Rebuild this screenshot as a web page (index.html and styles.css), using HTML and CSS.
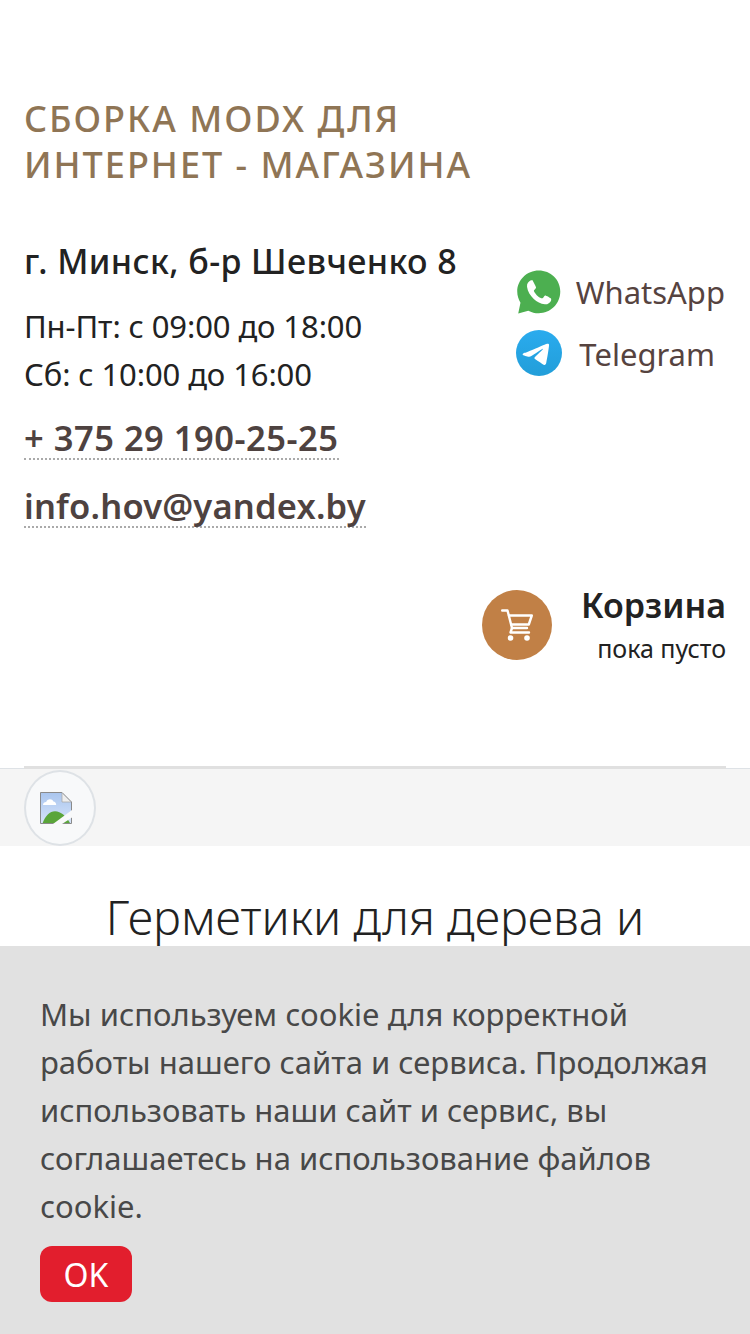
FILE: index.html
```html
<!DOCTYPE html>
<html lang="ru">
<head>
<meta charset="utf-8">
<title>Сборка MODX для интернет-магазина</title>
<link rel="stylesheet" href="styles.css">
</head>
<body>
<header class="header">
  <a class="brand">СБОРКА MODX ДЛЯ<br>ИНТЕРНЕТ - МАГАЗИНА</a>
  <div class="contacts">
    <div class="info">
      <div class="address">г. Минск, б-р Шевченко 8</div>
      <div class="hours">Пн-Пт: с 09:00 до 18:00<br>Сб: с 10:00 до 16:00</div>
      <div class="link-row"><a class="link link-phone">+ 375 29 190-25-25</a></div>
      <div class="link-row link-row-mail"><a class="link link-mail">info.hov@yandex.by</a></div>
    </div>
    <div class="messengers">
      <a class="messenger">
        <svg class="msg-icon" viewBox="1 0 44.500 45" width="44" height="44">
          <path fill="#4caf50" d="M23 .5C10.900 .5 1 10.200 1 22.100c0 4.100 1.200 8 3.300 11.300L2 44.500l10.300-2.900c3.200 1.700 6.900 2.700 10.700 2.700 12.100 0 22-9.700 22-22.200S35.100 .5 23 .5z"/>
          <path fill="#fff" d="M16.700 10.600c-.6-.1-1.500-.1-2.200.2-1.800 1-3.900 3.100-3.500 6.400.6 4.800 3.400 9.200 6.900 12.500 3.200 3 7 5 11.300 5.400 3 .2 5.300-1.700 6.200-3.500.4-.8.400-1.800.2-2.300-.3-.6-5.300-3.300-6.100-3.200-.9.200-2 2.800-2.800 2.900-1.900.3-6.800-3.300-8.700-7.600-.3-.8 2.100-2.300 2.200-3.300.1-.9-2.800-6-3.500-7.500-.1-.2-.1-.3-.2-.4z"/>
        </svg>
        <span class="msg-name">WhatsApp</span>
      </a>
      <a class="messenger messenger-tg">
        <svg class="msg-icon" viewBox="0 0 46 46" width="46" height="46">
          <defs><linearGradient id="tg" x1="0" y1="0" x2="0" y2="1"><stop offset="0" stop-color="#2aabee"/><stop offset="1" stop-color="#229ed9"/></linearGradient></defs>
          <circle cx="23" cy="23" r="23" fill="url(#tg)"/>
          <path fill="#fff" d="M9.500 22.800c6.800-3 11.300-4.900 13.600-5.900 6.500-2.700 7.800-3.200 8.700-3.200.2 0 .6 0 .9.300.2.200.3.400.3.700 0 .2.100.6 0 1-.3 3.700-1.900 12.700-2.700 16.800-.3 1.800-1 2.400-1.600 2.400-1.400.1-2.400-.9-3.700-1.800-2.100-1.400-3.300-2.200-5.300-3.500-2.400-1.500-.8-2.400.5-3.800.3-.4 6.500-5.900 6.600-6.500 0-.1 0-.3-.1-.4-.2-.1-.4-.1-.5 0-.2.100-3.700 2.400-10.400 6.900-1 .7-1.900 1-2.700 1-.9 0-2.600-.5-3.800-.9-1.600-.5-2.800-.8-2.700-1.600.1-.4.700-.9 1.900-1.500z"/>
        </svg>
        <span class="msg-name msg-name-tg">Telegram</span>
      </a>
    </div>
  </div>
  <div class="cart">
    <div class="cart-circle">
      <svg viewBox="0 0 32 32" width="32" height="32" fill="none" stroke="#fff" stroke-width="2.400" stroke-linejoin="round" stroke-linecap="round">
        <path d="M1.200 1.500h5.300l4.500 17.500h15"/>
        <path d="M8 6.500h22.800l-3 9H10.300"/>
        <path d="M11 19l-1.500 4.500h18.500"/>
        <circle cx="9.500" cy="29" r="2.800" fill="#fff" stroke="none"/>
        <circle cx="26" cy="29" r="2.800" fill="#fff" stroke="none"/>
      </svg>
    </div>
    <div class="cart-text">
      <div class="cart-title">Корзина</div>
      <div class="cart-note">пока пусто</div>
    </div>
  </div>
</header>
<nav class="menu-bar">
  <div class="menu-logo">
    <svg viewBox="0 0 32 32" width="32" height="32">
      <defs><linearGradient id="sky" x1="0" y1="0" x2="0" y2="1"><stop offset="0" stop-color="#a9c5ee"/><stop offset="1" stop-color="#d7e4fa"/></linearGradient></defs>
      <path fill="url(#sky)" stroke="#8a8a8a" stroke-width="1" d="M.5.500h21.500l9.500 9.500v21.500H.5z"/>
      <path fill="#fff" d="M3 13c0-1.800 1.600-3 3.200-2.900.8-3.400 6-3.800 7.200-.6 1.500.1 2.800 1.500 2.800 3.500z"/>
      <path fill="#5aa53a" d="M2.700 31C5 24 10 19.300 15 19.300c6 0 11 5 15 11.700z"/>
      <path fill="#f8f9fa" d="M32 18v7.500L22 32h-9z"/>
      <path fill="#eee" stroke="#aaa" stroke-width=".8" d="M22 .8v9.200h9.200z"/>
    </svg>
  </div>
</nav>
<main class="content">
  <h1 class="page-title">Герметики для дерева и</h1>
</main>
<div class="cookie">
  <p class="cookie-text">Мы используем cookie для корректной работы нашего сайта и сервиса. Продолжая использовать наши сайт и сервис, вы соглашаетесь на использование файлов cookie.</p>
  <button class="cookie-ok" type="button">OK</button>
</div>
</body>
</html>
```
FILE: styles.css
```css
* { box-sizing: border-box; }
html, body { margin: 0; padding: 0; height: 1334px; overflow: hidden; background: #fff; }
body { font-family: "Noto Sans", "Open Sans", sans-serif; color: #222; }
a { color: inherit; text-decoration: none; }

.header { padding: 96px 24px 0; height: 768px; display: flex; flex-direction: column; }
.brand { font-size: 36px; line-height: 46px; font-weight: 500; color: #8f7555; letter-spacing: 2px; }

.contacts { display: flex; justify-content: space-between; margin-top: 49px; }
.address { font-size: 34px; line-height: 48px; font-weight: 500; color: #222; letter-spacing: .4px; white-space: nowrap; }
.hours { font-size: 31px; line-height: 48px; margin-top: 17px; letter-spacing: -.1px; }
.link-row { margin-top: 20px; height: 42px; }
.link-row-mail { margin-top: 26px; }
.link { font-size: 34.5px; line-height: 40px; font-weight: 600; color: #4e4240; border-bottom: 2px dotted #aaa; display: inline-block; }
.link-phone { letter-spacing: .5px; }
.link-mail { letter-spacing: .17px; }

.messengers { display: flex; flex-direction: column; align-items: flex-end; gap: 15px; padding-top: 32px; padding-right: 1px; }
.messenger { display: flex; align-items: center; color: #56433f; font-size: 31px; line-height: 46px; }
.messenger-tg { align-items: flex-start; }
.msg-icon { flex: none; }
.msg-name { margin-left: 15px; }
.msg-name-tg { margin: 0 10px 0 17px; padding-top: 1px; }

.cart { display: flex; justify-content: flex-end; align-items: center; gap: 29px; margin-top: 55px; }
.cart-circle { width: 70px; height: 70px; border-radius: 50%; background: #c18046; display: flex; align-items: center; justify-content: center; }
.cart-text { text-align: right; }
.cart-title { font-size: 34px; line-height: 44px; font-weight: 600; color: #222; }
.cart-note { font-size: 25px; line-height: 36px; margin-top: 3px; color: #222; }

.menu-bar { position: relative; height: 78px; background: #f5f5f5; border-top: 1px solid #dee2e6; padding: 1px 24px 0; }
.menu-bar::before { content: ""; position: absolute; left: 24px; right: 24px; top: -3px; height: 3px; background: #e0e0e0; }
.menu-logo { width: 72px; height: 76px; border: 2px solid #dee2e6; border-radius: 50%; background: #f8f9fa; display: flex; align-items: center; padding-left: 14px; }

.content { padding: 39px 24px 0; }
.page-title { margin: 0; font-size: 47px; line-height: 64px; font-weight: 300; color: #222; text-align: center; }

.cookie { position: fixed; left: 0; right: 0; bottom: 0; height: 388px; background: #e1e1e1; padding: 44px 38px 0 40px; }
.cookie-text { margin: 0; font-size: 31px; line-height: 48px; color: #484848; }
.cookie-ok { display: block; margin-top: 16px; width: 92px; height: 56px; border: 0; border-radius: 12px; background: #e21e2d; color: #fff; font: 32px "Noto Sans", sans-serif; }
```
